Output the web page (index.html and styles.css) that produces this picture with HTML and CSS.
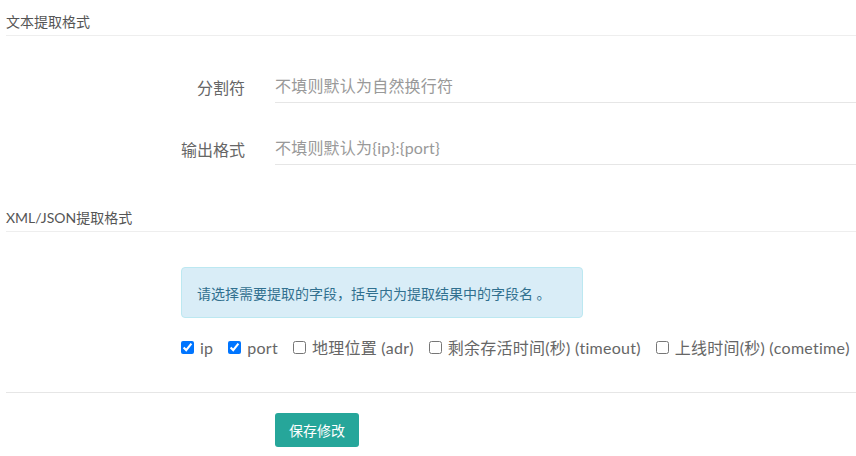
FILE: index.html
```html
<!DOCTYPE html>
<html lang="zh-CN">
<head>
<meta charset="utf-8">
<title>提取格式</title>
<link rel="stylesheet" href="styles.css">
</head>
<body>
<div class="page">
  <div class="section-title">文本提取格式</div>
  <div class="form-row first">
    <label class="form-label">分割符</label>
    <input class="form-input" type="text" placeholder="不填则默认为自然换行符">
  </div>
  <div class="form-row">
    <label class="form-label">输出格式</label>
    <input class="form-input" type="text" placeholder="不填则默认为{ip}:{port}">
  </div>
  <div class="section-title second">XML/JSON提取格式</div>
  <div class="indent">
    <div class="alert">请选择需要提取的字段，括号内为提取结果中的字段名 。</div>
    <div class="checks">
      <label class="check"><input type="checkbox" checked>ip</label>
      <label class="check"><input type="checkbox" checked>port</label>
      <label class="check"><input type="checkbox">地理位置 (adr)</label>
      <label class="check"><input type="checkbox">剩余存活时间(秒) (timeout)</label>
      <label class="check"><input type="checkbox">上线时间(秒) (cometime)</label>
    </div>
  </div>
  <div class="divider"></div>
  <div class="actions">
    <button class="btn" type="button">保存修改</button>
  </div>
</div>
</body>
</html>
```

FILE: styles.css
```css
html, body {
  margin: 0;
  padding: 0;
  background: #fff;
}
body {
  font-family: "Lato", "Noto Sans CJK SC", sans-serif;
  color: #666;
}
.page {
  padding-left: 6px;
}
.section-title {
  font-size: 14px;
  color: #555;
  line-height: 18px;
  padding-top: 13px;
  padding-bottom: 4px;
  border-bottom: 1px solid #eee;
}
.section-title.second {
  margin-top: 31px;
}
.form-row {
  display: flex;
  align-items: flex-end;
  margin-top: 28px;
}
.form-row.first {
  margin-top: 33px;
}
.form-label {
  width: 239px;
  margin-right: 30px;
  text-align: right;
  font-size: 16px;
  color: #666;
  line-height: 22px;
  padding-bottom: 4px;
}
.form-input {
  flex: 1;
  height: 34px;
  box-sizing: border-box;
  border: none;
  border-bottom: 1px solid #e6e6e6;
  padding: 0;
  font-family: inherit;
  font-size: 16px;
  letter-spacing: 0.2px;
  color: #333;
  outline: none;
  background: transparent;
}
.form-input::placeholder {
  color: #999;
}
.indent {
  padding-left: 175px;
}
.alert {
  margin-top: 35px;
  width: 402px;
  box-sizing: border-box;
  height: 51px;
  padding: 0 15px;
  display: flex;
  align-items: center;
  background: #d9edf7;
  border: 1px solid #bce8f1;
  border-radius: 4px;
  color: #31708f;
  font-size: 14px;
}
.checks {
  display: flex;
  margin-top: 18px;
  height: 22px;
  align-items: center;
  white-space: nowrap;
}
.check {
  display: flex;
  align-items: center;
  font-size: 16px;
  letter-spacing: 0.25px;
  color: #666;
  margin-right: 15px;
}
.check input {
  margin: 0 6px 0 0;
  width: 13px;
  height: 13px;
}
.divider {
  margin-top: 34px;
  border-top: 1px solid #e6e6e6;
}
.actions {
  padding-left: 269px;
  padding-top: 20px;
}
.btn {
  width: 84px;
  height: 34px;
  border: none;
  border-radius: 3px;
  background: #26a69a;
  color: #fff;
  font-family: inherit;
  font-size: 14px;
  padding: 0;
}
```
